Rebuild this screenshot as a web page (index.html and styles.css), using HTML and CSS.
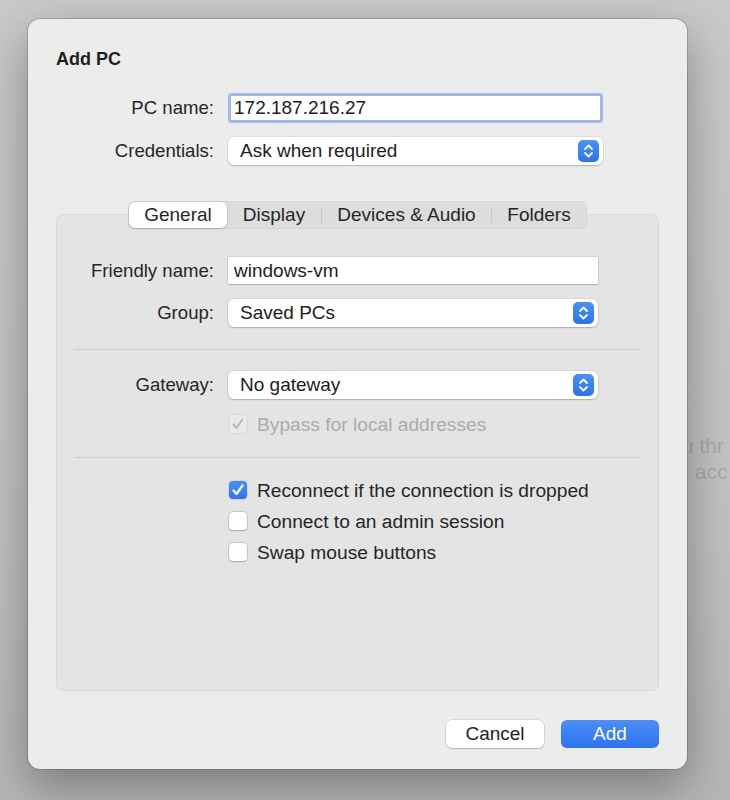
FILE: index.html
```html
<!DOCTYPE html>
<html>
<head>
<meta charset="utf-8">
<link rel="stylesheet" href="styles.css">
</head>
<body>
<div class="behind"><div>u thr</div><div class="behind-2">acc</div></div>
<div class="dialog">
  <h1 class="title">Add PC</h1>
  <div class="top-form">
    <div class="row row-tall">
      <label class="lbl">PC name:</label>
      <div class="textfield focused">172.187.216.27</div>
    </div>
    <div class="row">
      <label class="lbl">Credentials:</label>
      <div class="popup wide">
        <span>Ask when required</span>
        <svg class="stepper" width="21" height="22" viewBox="0 0 21 22"><defs><linearGradient id="sg1" x1="0" y1="0" x2="0" y2="1"><stop offset="0" stop-color="#4b91f8"/><stop offset="1" stop-color="#2d72f0"/></linearGradient></defs><rect width="21" height="22" rx="5" fill="url(#sg1)"/><polyline points="7,9 10.5,5.5 14,9" fill="none" stroke="#fff" stroke-width="1.8" stroke-linecap="round" stroke-linejoin="round"/><polyline points="7,13 10.5,16.5 14,13" fill="none" stroke="#fff" stroke-width="1.8" stroke-linecap="round" stroke-linejoin="round"/></svg>
      </div>
    </div>
  </div>

  <div class="tabbox">
    <div class="tabs">
      <div class="tab selected t-general">General</div>
      <div class="tab t-display">Display</div>
      <div class="tab-sep"></div>
      <div class="tab t-devices">Devices &amp; Audio</div>
      <div class="tab-sep"></div>
      <div class="tab t-folders">Folders</div>
    </div>
    <div class="panel">
      <div class="prow h27">
        <label class="plbl">Friendly name:</label>
        <div class="textfield plain">windows-vm</div>
      </div>
      <div class="prow mt15">
        <label class="plbl">Group:</label>
        <div class="popup narrow">
          <span>Saved PCs</span>
          <svg class="stepper" width="21" height="22" viewBox="0 0 21 22"><defs><linearGradient id="sg2" x1="0" y1="0" x2="0" y2="1"><stop offset="0" stop-color="#4b91f8"/><stop offset="1" stop-color="#2d72f0"/></linearGradient></defs><rect width="21" height="22" rx="5" fill="url(#sg2)"/><polyline points="7,9 10.5,5.5 14,9" fill="none" stroke="#fff" stroke-width="1.8" stroke-linecap="round" stroke-linejoin="round"/><polyline points="7,13 10.5,16.5 14,13" fill="none" stroke="#fff" stroke-width="1.8" stroke-linecap="round" stroke-linejoin="round"/></svg>
        </div>
      </div>
      <div class="divider d1"></div>
      <div class="prow">
        <label class="plbl">Gateway:</label>
        <div class="popup narrow">
          <span>No gateway</span>
          <svg class="stepper" width="21" height="22" viewBox="0 0 21 22"><defs><linearGradient id="sg3" x1="0" y1="0" x2="0" y2="1"><stop offset="0" stop-color="#4b91f8"/><stop offset="1" stop-color="#2d72f0"/></linearGradient></defs><rect width="21" height="22" rx="5" fill="url(#sg3)"/><polyline points="7,9 10.5,5.5 14,9" fill="none" stroke="#fff" stroke-width="1.8" stroke-linecap="round" stroke-linejoin="round"/><polyline points="7,13 10.5,16.5 14,13" fill="none" stroke="#fff" stroke-width="1.8" stroke-linecap="round" stroke-linejoin="round"/></svg>
        </div>
      </div>
      <div class="crow mt16 disabled">
        <span class="check disabled-check"><svg width="18" height="18" viewBox="0 0 18 18"><polyline points="4.5,9.5 7.5,13 13.5,4.5" fill="none" stroke="#b9b9b9" stroke-width="2" stroke-linecap="round" stroke-linejoin="round"/></svg></span>
        <span class="ctext">Bypass for local addresses</span>
      </div>
      <div class="divider d2"></div>
      <div class="crow">
        <span class="check checked"><svg width="18" height="18" viewBox="0 0 18 18"><polyline points="4.5,9.5 7.5,13 13.5,4.5" fill="none" stroke="#fff" stroke-width="2.2" stroke-linecap="round" stroke-linejoin="round"/></svg></span>
        <span class="ctext">Reconnect if the connection is dropped</span>
      </div>
      <div class="crow mt13">
        <span class="check"></span>
        <span class="ctext">Connect to an admin session</span>
      </div>
      <div class="crow mt13">
        <span class="check"></span>
        <span class="ctext">Swap mouse buttons</span>
      </div>
    </div>
  </div>

  <div class="buttons">
    <button class="btn cancel">Cancel</button>
    <button class="btn primary">Add</button>
  </div>
</div>
</body>
</html>
```

FILE: styles.css
```css
html, body {
  margin: 0;
}
body {
  width: 730px;
  height: 800px;
  box-sizing: border-box;
  padding: 19px 0 0 28px;
  overflow: hidden;
  position: relative;
  background: linear-gradient(180deg, #c9c9c9 0%, #c2c2c2 60%, #b6b6b6 100%);
  font-family: "Liberation Sans", Arial, sans-serif;
  color: #242424;
}

.behind {
  position: absolute;
  left: 682px;
  top: 433px;
  font-size: 21px;
  line-height: 26px;
  color: #a7a7a7;
  white-space: nowrap;
  filter: blur(0.4px);
  z-index: 0;
}
.behind-2 {
  padding-left: 13px;
}

.dialog {
  position: relative;
  z-index: 1;
  width: 659px;
  height: 750px;
  box-sizing: border-box;
  padding: 29px 28px 21px;
  background: #ececec;
  border-radius: 12px;
  box-shadow: 0 0 0 1px rgba(0, 0, 0, 0.16), 0 18px 48px rgba(0, 0, 0, 0.34);
  display: flex;
  flex-direction: column;
}

.title {
  margin: 0;
  font-size: 18px;
  line-height: 22px;
  font-weight: bold;
  color: #1f1f1f;
}

.top-form {
  margin-top: 23px;
  display: flex;
  flex-direction: column;
  gap: 14px;
}

.row {
  display: flex;
  align-items: center;
  gap: 14px;
  height: 28px;
}
.row-tall {
  height: 30px;
}

.lbl {
  width: 158px;
  text-align: right;
  font-size: 18.6px;
  color: #262626;
}

.textfield {
  box-sizing: border-box;
  background: #fff;
  font-size: 19px;
  color: #1d1d1d;
  display: flex;
  align-items: center;
}
.textfield.focused {
  width: 375px;
  height: 30px;
  border: 3px solid #a0b8ef;
  border-radius: 4px;
  padding-left: 3px;
}
.textfield.plain {
  width: 370px;
  height: 27px;
  padding-left: 6px;
  box-shadow: 0 0 0 0.5px rgba(0, 0, 0, 0.14), 0 1px 1px rgba(0, 0, 0, 0.14);
}

.popup {
  box-sizing: border-box;
  height: 28px;
  background: #fff;
  border-radius: 6px;
  box-shadow: 0 0 0 0.5px rgba(0, 0, 0, 0.12), 0 1px 1.5px rgba(0, 0, 0, 0.2);
  display: flex;
  align-items: center;
  justify-content: space-between;
  padding: 0 4px 0 12px;
  font-size: 19px;
  color: #1d1d1d;
}
.popup.wide {
  width: 375px;
}
.popup.narrow {
  width: 370px;
}
.stepper {
  display: block;
  flex: none;
}

.tabbox {
  margin-top: 36px;
  display: flex;
  flex-direction: column;
  align-items: center;
  flex: 1;
}

.tabs {
  position: relative;
  z-index: 2;
  display: flex;
  align-items: center;
  height: 28px;
  box-sizing: border-box;
  padding: 1px;
  background: #dddddd;
  border-radius: 7px;
  box-shadow: inset 0 0 0 0.5px rgba(0, 0, 0, 0.06);
}
.tab {
  height: 26px;
  display: flex;
  align-items: center;
  justify-content: center;
  font-size: 19px;
  color: #262626;
  border-radius: 6px;
}
.tab.selected {
  background: #fff;
  box-shadow: 0 0 0 0.5px rgba(0, 0, 0, 0.1), 0 1px 2px rgba(0, 0, 0, 0.18);
}
.t-general { width: 98px; }
.t-display { width: 94px; }
.t-devices { width: 169px; }
.t-folders { width: 94px; }
.tab-sep {
  width: 1px;
  height: 15px;
  background: #c6c6c6;
}

.panel {
  align-self: stretch;
  margin-top: -15px;
  flex: 1;
  box-sizing: border-box;
  padding: 42px 17px 0;
  background: #e4e4e4;
  border: 1px solid #d9d9d9;
  border-radius: 7px;
  display: flex;
  flex-direction: column;
}

.prow {
  display: flex;
  align-items: center;
  gap: 14px;
  height: 28px;
}
.prow.h27 {
  height: 27px;
}
.plbl {
  width: 140px;
  text-align: right;
  font-size: 18.6px;
  color: #262626;
}

.mt15 { margin-top: 15px; }
.mt16 { margin-top: 16px; }
.mt13 { margin-top: 13px; }

.divider {
  height: 1px;
  background: #cdcdcd;
  flex: none;
}
.d1 { margin: 22px 0 21px; }
.d2 { margin: 24px 0 23px; }

.crow {
  display: flex;
  align-items: center;
  height: 18px;
  padding-left: 155px;
  gap: 10px;
}
.check {
  width: 18px;
  height: 18px;
  box-sizing: border-box;
  border-radius: 4px;
  background: #fff;
  box-shadow: 0 0 0 0.5px rgba(0, 0, 0, 0.2), 0 0.5px 1.5px rgba(0, 0, 0, 0.18);
  flex: none;
}
.check svg {
  display: block;
}
.check.checked {
  background: linear-gradient(180deg, #4a8ff8, #2f74f0);
  box-shadow: 0 0 0 0.5px rgba(0, 0, 0, 0.15);
}
.check.disabled-check {
  background: #eaeaea;
  box-shadow: 0 0 0 0.5px rgba(0, 0, 0, 0.12);
}
.ctext {
  font-size: 19.2px;
  line-height: 20px;
  padding-top: 2px;
  color: #262626;
  white-space: nowrap;
}
.disabled .ctext {
  color: #ababab;
}

.buttons {
  margin-top: 29px;
  display: flex;
  justify-content: flex-end;
  gap: 17px;
}
.btn {
  width: 98px;
  height: 28px;
  border: none;
  border-radius: 6px;
  font-family: "Liberation Sans", Arial, sans-serif;
  font-size: 19px;
  padding: 0;
}
.btn.cancel {
  background: #fff;
  color: #222;
  box-shadow: 0 0 0 0.5px rgba(0, 0, 0, 0.14), 0 1px 1.5px rgba(0, 0, 0, 0.2);
}
.btn.primary {
  background: linear-gradient(180deg, #4a8ff8, #2e72f0);
  color: #fff;
}
```
